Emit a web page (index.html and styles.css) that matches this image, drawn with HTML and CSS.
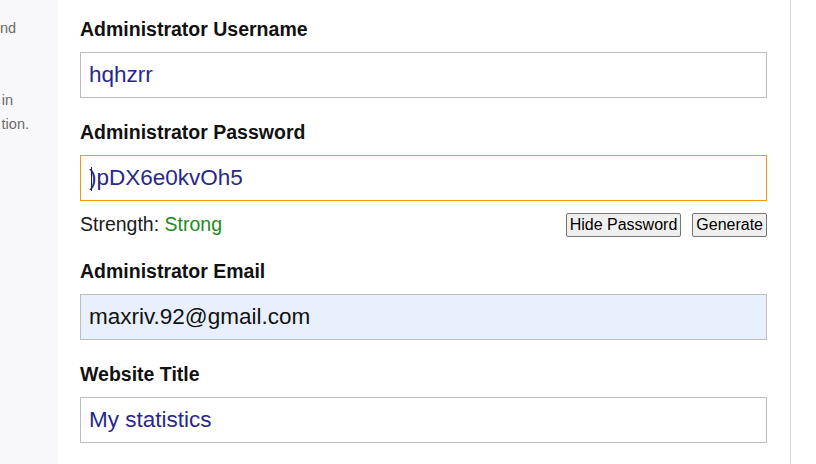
FILE: index.html
```html
<!DOCTYPE html>
<html>
<head>
<meta charset="utf-8">
<link rel="stylesheet" href="styles.css">
</head>
<body>
<div class="page">
  <aside class="sidebar">
    <div class="side-line side-l1">nd</div>
    <div class="side-line"></div>
    <div class="side-line"></div>
    <div class="side-line side-l2">in</div>
    <div class="side-line side-l3">tion.</div>
  </aside>
  <main class="main">
    <div class="field">
      <div class="label">Administrator Username</div>
      <div class="input"><span class="value">hqhzrr</span></div>
    </div>
    <div class="field">
      <div class="label">Administrator Password</div>
      <div class="input input-focus"><span class="caret"></span><span class="value">)pDX6e0kvOh5</span></div>
      <div class="strength-row">
        <div class="strength">Strength: <span class="strong">Strong</span></div>
        <div class="buttons">
          <button class="btn">Hide Password</button>
          <button class="btn">Generate</button>
        </div>
      </div>
    </div>
    <div class="field">
      <div class="label">Administrator Email</div>
      <div class="input input-autofill"><span class="value value-black">maxriv.92@gmail.com</span></div>
    </div>
    <div class="field">
      <div class="label">Website Title</div>
      <div class="input"><span class="value">My statistics</span></div>
    </div>
  </main>
  <div class="rightpad"></div>
</div>
</body>
</html>
```
FILE: styles.css
```css
html, body {
  margin: 0;
  padding: 0;
  background: #ffffff;
  font-family: "Liberation Sans", Arial, sans-serif;
}
.page {
  display: flex;
  width: 816px;
  height: 464px;
  overflow: hidden;
}
.sidebar {
  width: 58px;
  flex: none;
  background: #f8f8fa;
  padding-top: 16px;
  box-sizing: border-box;
  overflow: hidden;
}
.side-line {
  font-size: 14.5px;
  line-height: 24px;
  height: 24px;
  color: #6b6b6b;
  white-space: nowrap;
  text-align: right;
}
.side-l1 { padding-right: 47px; }
.side-l2 { padding-right: 45px; }
.side-l3 { padding-right: 29px; }
.main {
  width: 733px;
  flex: none;
  box-sizing: border-box;
  padding: 18px 23px 0 22px;
  border-right: 1px solid #dcdcdc;
  display: flex;
  flex-direction: column;
  gap: 23px;
}
.rightpad { flex: 1; }
.label {
  font-size: 19.5px;
  font-weight: bold;
  line-height: 22px;
  color: #111;
  margin-bottom: 12px;
}
.input {
  height: 46px;
  box-sizing: border-box;
  border: 1px solid #bdbdbd;
  background: #fff;
  display: flex;
  align-items: center;
  padding-left: 8px;
  position: relative;
}
.input-focus {
  border-color: #eca100;
}
.input-autofill {
  background: #e8f0fe;
}
.value {
  font-size: 22.5px;
  color: #28288a;
  white-space: nowrap;
}
.value-black { color: #111; }
.caret {
  position: absolute;
  left: 10px;
  top: 11px;
  width: 1px;
  height: 24px;
  background: #1a1a7a;
}
.strength-row {
  margin-top: 12px;
  height: 24px;
  display: flex;
  align-items: flex-start;
  justify-content: space-between;
}
.strength {
  font-size: 19.5px;
  line-height: 22px;
  color: #1a1a1a;
}
.strong { color: #1e8a1e; }
.buttons {
  display: flex;
  gap: 11px;
}
.btn {
  font-family: "Liberation Sans", Arial, sans-serif;
  font-size: 16px;
  height: 24px;
  padding: 0 3px;
  border: 1px solid #767676;
  border-radius: 2px;
  background: #efefef;
  color: #000;
  line-height: 20px;
}
```
